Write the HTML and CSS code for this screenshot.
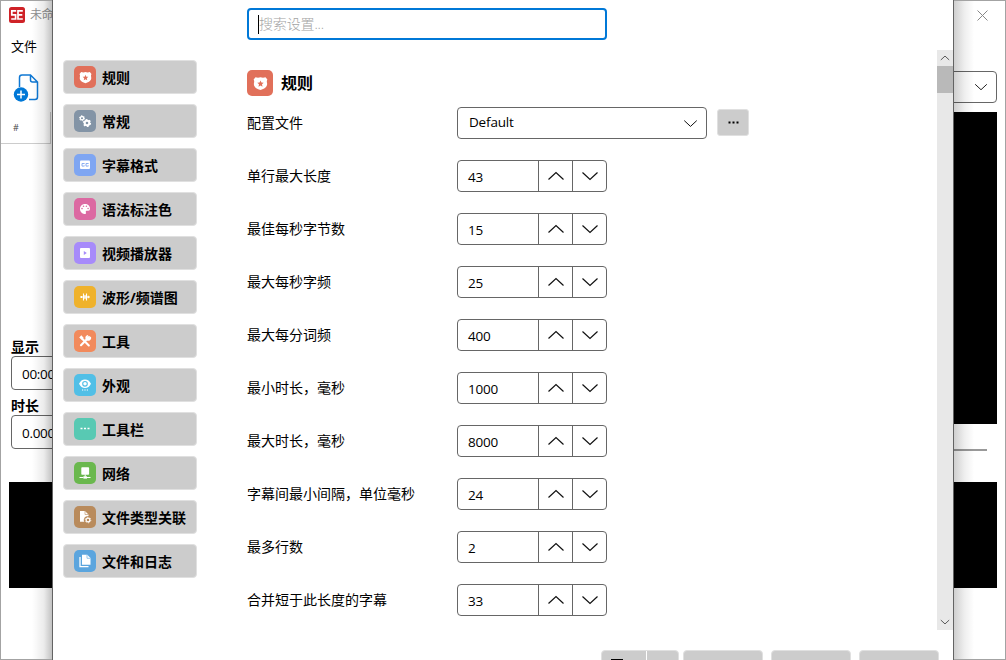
FILE: index.html
```html
<!DOCTYPE html>
<html lang="zh-CN">
<head>
<meta charset="utf-8">
<title>设置</title>
<link rel="stylesheet" href="styles.css">
</head>
<body>
<svg class="defs" width="0" height="0">
  <symbol id="up" viewBox="0 0 18 10"><path d="M1.5 8.5 9 1.5l7.500 7" fill="none" stroke="#111" stroke-width="1.2"/></symbol>
  <symbol id="down" viewBox="0 0 18 10"><path d="M1.500 1.500 9 8.500l7.500-7" fill="none" stroke="#111" stroke-width="1.2"/></symbol>
  <symbol id="badge" viewBox="0 0 24 24"><path fill="#fff" fill-rule="evenodd" d="M4 2q4 1.500 8 0 4 1.500 8 0l3 3.500q-1.500 2.500-.5 6c1 6-4 9-10.500 11-6.500-2-11.500-5-10.500-11q1-3.500-.5-6zM12 7l-1.500 3.500-3.700.3 2.800 2.500-.8 3.700 3.200-2 3.200 2-.8-3.700 2.800-2.500-3.700-.3z"/></symbol>
</svg>
<div class="window">
  <div class="left">
    <div class="titlebar">
      <svg class="logo" width="16" height="16" viewBox="0 0 16 16"><rect width="16" height="16" rx="2.500" fill="#cf2227"/><path d="M7.200 3.800H2.800v4h3.800v4.200H2.200M13.800 3.800H9v8.200h4.800M9 7.900h4.300" fill="none" stroke="#fff" stroke-width="1.700"/></svg>
      <span>未命</span>
    </div>
    <div class="menu">文件</div>
    <div class="toolbar">
      <svg width="28" height="30" viewBox="0 0 28 30"><path d="M6.500 14V4.500q0-2.500 2.500-2.500h8.500l7 7V24q0 2.500-2.500 2.500h-6M17.500 2v5q0 2 2 2h5" fill="none" stroke="#0f78d4" stroke-width="1.500"/><circle cx="8" cy="21.500" r="7.200" fill="#0078d7"/><path d="M8 17.500v8M4 21.500h8" stroke="#fff" stroke-width="1.500"/></svg>
    </div>
    <div class="colhead">#</div>
    <div class="grid-body"></div>
    <div class="field-label">显示</div>
    <div class="field">00:00</div>
    <div class="field-label second">时长</div>
    <div class="field">0.000</div>
    <div class="wave"></div>
  </div>

  <div class="dialog">
    <div class="search"><span class="caret"></span><span>搜索设置...</span></div>
    <div class="content">
      <nav class="nav">
        <div class="item"><i class="ico c1"><svg width="13" height="13"><use href="#badge"/></svg></i><span>规则</span></div>
        <div class="item"><i class="ico c2"><svg width="14" height="14" viewBox="0 0 14 14" fill="none" stroke="#fff"><circle cx="4" cy="4.200" r="1.700" stroke-width="1.300"/><circle cx="4" cy="4.200" r="2.500" stroke-width="1" stroke-dasharray="1.300 1.318"/><circle cx="9" cy="9" r="2.300" stroke-width="2"/><circle cx="9" cy="9" r="3.500" stroke-width="1.200" stroke-dasharray="1.830 1.836"/></svg></i><span>常规</span></div>
        <div class="item"><i class="ico c3"><svg width="12" height="12" viewBox="0 0 12 12"><rect x="1" y="1.500" width="10" height="8.600" rx="1" fill="#fff"/><path d="M5.300 5V4.500H3v2.600h2.300v-.6M9.300 5V4.500H7v2.600h2.300v-.6" fill="none" stroke="#7fa6f2" stroke-width=".9"/></svg></i><span>字幕格式</span></div>
        <div class="item"><i class="ico c4"><svg width="12" height="12" viewBox="0 0 12 12"><path d="M6 1C3 1 1 3.200 1 6s2.200 5 5 5c1.500 0 1-1.200.8-1.700C6.500 8.300 7 7.700 8 7.700h1.300C10.500 7.700 11 7 11 5.500 11 2.800 8.800 1 6 1z" fill="#fff"/><g fill="#dc69a2"><circle cx="3" cy="5.600" r=".8"/><circle cx="4.500" cy="3.300" r=".8"/><circle cx="7.400" cy="3.300" r=".8"/><circle cx="9.100" cy="5.500" r=".8"/></g></svg></i><span>语法标注色</span></div>
        <div class="item"><i class="ico c5"><svg width="12" height="12" viewBox="0 0 12 12"><rect x="1" y="1" width="10" height="10" rx="1" fill="#fff"/><path d="M4.800 4v4l3-2z" fill="#a78bfa"/></svg></i><span>视频播放器</span></div>
        <div class="item"><i class="ico c6"><svg width="12" height="12" viewBox="0 0 12 12"><path d="M1 6h10M2.500 5v2M4.500 2.500v7M6 4v4M7.500 2.500v7M9.300 4.700v2.600" fill="none" stroke="#fff" stroke-width="1.100"/></svg></i><span>波形/频谱图</span></div>
        <div class="item"><i class="ico c7"><svg width="14" height="14" viewBox="0 0 14 14"><path d="M3.500 4 10.800 11.500M11 3 3 11.200" stroke="#fff" stroke-width="2.100" stroke-linecap="round"/><path d="M1.200 3.500 3.300 1.200 5.600 3.800 3.800 5.800z" fill="#fff"/><path d="M12.800 2.500A2.900 2.900 0 1 1 10.300 1l-.7 2.300 1.200 1z" fill="#fff"/></svg></i><span>工具</span></div>
        <div class="item"><i class="ico c8"><svg width="14" height="14" viewBox="0 0 14 14"><path d="M1 5.800Q3 1.500 7 1.500T13 5.800Q11 10 7 10T1 5.800z" fill="#fff"/><circle cx="7" cy="5.800" r="2.300" fill="none" stroke="#51bfe6" stroke-width="1.100"/><path d="M4 12h1.200M6.400 12h1.200M8.800 12H10" stroke="#fff" stroke-width="1.100"/></svg></i><span>外观</span></div>
        <div class="item"><i class="ico c9"><svg width="12" height="12" viewBox="0 0 12 12"><path d="M1.500 5.500h2M5 5.500h2M8.500 5.500h2" stroke="#fff" stroke-width="1.600"/></svg></i><span>工具栏</span></div>
        <div class="item"><i class="ico c10"><svg width="14" height="14" viewBox="0 0 14 14" fill="#fff"><rect x="3.300" y="1.200" width="7.800" height="7.500" rx=".8"/><path d="M6.700 8.500h1v2.200h-1zM1.500 11h4v1h-4zM9 11h3.500v1H9z"/><rect x="5.400" y="10.300" width="3.600" height="2.300"/></svg></i><span>网络</span></div>
        <div class="item"><i class="ico c11"><svg width="14" height="14" viewBox="0 0 14 14"><path d="M2 1h5l3.500 3.500V6A4 4 0 0 0 6.300 11.800H2z" fill="#fff"/><path d="M7 1v3.500h3.500" fill="none" stroke="#b98b5c" stroke-width=".6"/><circle cx="10" cy="10" r="1.900" fill="none" stroke="#fff" stroke-width="1.200"/><circle cx="10" cy="10" r="2.800" fill="none" stroke="#fff" stroke-width=".8" stroke-dasharray="1.400 1.530"/></svg></i><span>文件类型关联</span></div>
        <div class="item"><i class="ico c12"><svg width="14" height="14" viewBox="0 0 14 14"><path d="M4 .8h5.300L12.500 4v6.700H4z" fill="#fff"/><path d="M9 1v3.300h3.300" fill="none" stroke="#5ba5de" stroke-width=".6"/><path d="M2 3v9.700h8.500" fill="none" stroke="#fff" stroke-width="1.300"/></svg></i><span>文件和日志</span></div>
      </nav>
      <main class="main">
        <div class="heading"><i class="ico big c1"><svg width="15" height="15"><use href="#badge"/></svg></i>规则</div>
        <div class="row"><span class="label">配置文件</span>
          <div class="combo"><span>Default</span><svg width="15" height="9"><use href="#down"/></svg></div>
          <div class="more"><svg width="11" height="3" viewBox="0 0 11 3"><path d="M.5.500h2v2h-2zM4.500.500h2v2h-2zM8.500.500h2v2h-2z"/></svg></div>
        </div>
        <div class="row"><span class="label">单行最大长度</span><div class="spin"><span>43</span><b><svg><use href="#up"/></svg></b><b><svg><use href="#down"/></svg></b></div></div>
        <div class="row"><span class="label">最佳每秒字节数</span><div class="spin"><span>15</span><b><svg><use href="#up"/></svg></b><b><svg><use href="#down"/></svg></b></div></div>
        <div class="row"><span class="label">最大每秒字频</span><div class="spin"><span>25</span><b><svg><use href="#up"/></svg></b><b><svg><use href="#down"/></svg></b></div></div>
        <div class="row"><span class="label">最大每分词频</span><div class="spin"><span>400</span><b><svg><use href="#up"/></svg></b><b><svg><use href="#down"/></svg></b></div></div>
        <div class="row"><span class="label">最小时长，毫秒</span><div class="spin"><span>1000</span><b><svg><use href="#up"/></svg></b><b><svg><use href="#down"/></svg></b></div></div>
        <div class="row"><span class="label">最大时长，毫秒</span><div class="spin"><span>8000</span><b><svg><use href="#up"/></svg></b><b><svg><use href="#down"/></svg></b></div></div>
        <div class="row"><span class="label">字幕间最小间隔，单位毫秒</span><div class="spin"><span>24</span><b><svg><use href="#up"/></svg></b><b><svg><use href="#down"/></svg></b></div></div>
        <div class="row"><span class="label">最多行数</span><div class="spin"><span>2</span><b><svg><use href="#up"/></svg></b><b><svg><use href="#down"/></svg></b></div></div>
        <div class="row"><span class="label">合并短于此长度的字幕</span><div class="spin"><span>33</span><b><svg><use href="#up"/></svg></b><b><svg><use href="#down"/></svg></b></div></div>
      </main>
      <div class="scroll">
        <div class="arrow"><svg width="10" height="6"><use href="#up"/></svg></div>
        <div class="thumb"></div>
        <div class="track"></div>
        <div class="arrow"><svg width="10" height="6"><use href="#down"/></svg></div>
      </div>
    </div>
    <div class="footer">
      <div class="btn split"><span class="mark"></span><span class="part"></span></div>
      <div class="btn"></div><div class="btn"></div><div class="btn"></div>
    </div>
  </div>

  <div class="right">
    <div class="close"><svg width="11" height="11" viewBox="0 0 11 11"><path d="M.5.500l10 10M10.500.500l-10 10" stroke="#888" stroke-width="1"/></svg></div>
    <div class="rcombo"><svg width="14" height="8"><use href="#down"/></svg></div>
    <div class="video"></div>
    <div class="slider"></div>
    <div class="wave"></div>
  </div>
</div>
</body>
</html>
```
FILE: styles.css
```css
* { box-sizing: border-box; }
body {
  margin: 0;
  overflow: hidden;
  background: #fff;
  color: #000;
  font: 14px/20px "Open Sans", "Noto Sans CJK SC", sans-serif;
}
svg { display: block; flex: none; }
.defs { position: absolute; }
.window {
  display: flex;
  width: 1006px;
  height: 660px;
  border: 1px solid #a3a3a3;
}

/* Main window, left edge */
.left, .right {
  position: relative;
  display: flex;
  flex-direction: column;
  flex: none;
  width: 51px;
  overflow: hidden;
}
.left::after, .right::after {
  content: "";
  position: absolute;
  top: 0;
  bottom: 0;
  width: 20px;
}
.left::after { right: 0; background: linear-gradient(to left, rgba(0,0,0,.24), rgba(0,0,0,.08) 40%, transparent); }
.right::after { left: 0; background: linear-gradient(to right, rgba(0,0,0,.19), rgba(0,0,0,.07) 50%, transparent); }
.titlebar {
  display: flex;
  align-items: center;
  gap: 5px;
  height: 28px;
  padding-left: 8px;
  color: #909090;
  font-size: 12px;
  letter-spacing: -.4px;
  white-space: nowrap;
}
.menu { height: 36px; padding: 7px 0 0 10px; font-size: 13px; }
.toolbar { height: 47px; padding: 8px 0 0 12px; }
.colhead {
  height: 32px;
  margin-right: 1px;
  padding: 7px 0 0 12px;
  border-right: 1px solid #ccc;
  border-bottom: 1px solid #ccc;
  font-size: 9px;
  color: #444;
  line-height: 18px;
}
.grid-body { height: 193px; }
.field-label { height: 19px; font-weight: 700; padding-left: 10px; line-height: 20px; }
.field-label.second { margin-top: 6px; }
.field {
  width: 70px;
  height: 34px;
  margin-left: 10px;
  padding-left: 10px;
  border: 1px solid #666;
  border-radius: 4px;
  font-size: 13.500px;
  letter-spacing: -.3px;
  line-height: 34px;
}
.wave { height: 106px; background: #000; }
.left .wave { margin: 33px 0 0 8px; }

/* Settings dialog */
.dialog {
  display: flex;
  flex-direction: column;
  flex: none;
  width: 902px;
  margin: -1px 0;
  border: solid #636363;
  border-width: 0 1px;
  background: #fff;
  overflow: hidden;
}
.search {
  display: flex;
  flex: none;
  align-items: center;
  width: 360px;
  height: 32px;
  margin: 8px 0 10px 194px;
  padding-left: 9px;
  border: 2px solid #0078d7;
  border-radius: 4px;
  color: #a4a4a4;
  letter-spacing: -.15px;
  font-weight: 300;
}
.caret { width: 1px; height: 19px; background: #000; }
.content { display: flex; flex: none; height: 580px; }
.nav { display: flex; flex-direction: column; gap: 10px; width: 134px; margin: 10px 0 0 10px; }
.item {
  display: flex;
  align-items: center;
  gap: 6px;
  height: 34px;
  padding-left: 10px;
  border: 1px solid #e0e0e0;
  border-radius: 4px;
  background: #ccc;
  font-weight: 700;
  white-space: nowrap;
}
.item span { padding-top: 2px; }
.ico {
  display: flex;
  align-items: center;
  justify-content: center;
  flex: none;
  width: 22px;
  height: 22px;
  border-radius: 5px;
}
.big { width: 26px; height: 26px; }
.c1 { background: #e1705a; }
.c2 { background: #8394a6; }
.c3 { background: #7fa6f2; }
.c4 { background: #dc69a2; }
.c5 { background: #a78bfa; }
.c6 { background: #efb22c; }
.c7 { background: #f28a5c; }
.c8 { background: #51bfe6; }
.c9 { background: #58c9b3; }
.c10 { background: #6ab84e; }
.c11 { background: #b98b5c; }
.c12 { background: #5ba5de; }
.main { flex: 1; padding: 20px 0 0 50px; }
.heading { display: flex; align-items: center; gap: 8px; height: 26px; margin-bottom: 11px; font-size: 16px; font-weight: 700; }
.row { display: flex; align-items: center; height: 32px; margin-bottom: 21px; }
.label { width: 210px; white-space: nowrap; }
.combo, .spin { display: flex; height: 32px; border: 1px solid #666; border-radius: 4px; font-size: 13.500px; letter-spacing: -.18px; }
.combo { align-items: center; justify-content: space-between; width: 250px; padding: 0 8px 0 11px; }
.combo span { line-height: 28px; padding-bottom: 2px; }
.more {
  display: flex;
  align-items: center;
  justify-content: center;
  width: 32px;
  height: 27px;
  margin: 0 0 1px 10px;
  border: 1px solid #e0e0e0;
  border-radius: 3px;
  background: #ccc;
}
.spin { width: 150px; }
.spin span { flex: 1; padding-left: 10px; line-height: 32px; }
.spin b { display: flex; align-items: center; justify-content: center; width: 34px; border-left: 1px solid #666; }
.spin svg { width: 18px; height: 10px; }

.scroll { display: flex; flex-direction: column; width: 16px; background: #e8e8e8; }
.arrow { display: flex; align-items: center; justify-content: center; height: 16px; }
.thumb { height: 27px; background: #b9b9b9; }
.track { flex: 1; }

.footer { display: flex; flex: none; gap: 8px; margin: 20px 0 0 548px; }
.btn { width: 80px; height: 34px; border: 1px solid #e0e0e0; border-radius: 4px; background: #ccc; }
.split { display: flex; width: 78px; margin-right: -4px; }
.mark { width: 12px; height: 3px; margin: 8px 23px 0 9px; background: #000; }
.part { width: 1px; background: #fff; }

/* Main window, right edge */
.close { height: 70px; padding: 9px 0 0 23px; }
.rcombo {
  display: flex;
  align-items: center;
  justify-content: flex-end;
  height: 32px;
  margin: 0 8px 0 -6px;
  padding-right: 8px;
  border: 1px solid #666;
  border-radius: 4px;
}
.video { height: 312px; margin: 9px 8px 0 0; background: #000; }
.slider { height: 2px; margin: 25px 18px 31px 0; background: #999; }
.right .wave { margin-right: 8px; }
```
